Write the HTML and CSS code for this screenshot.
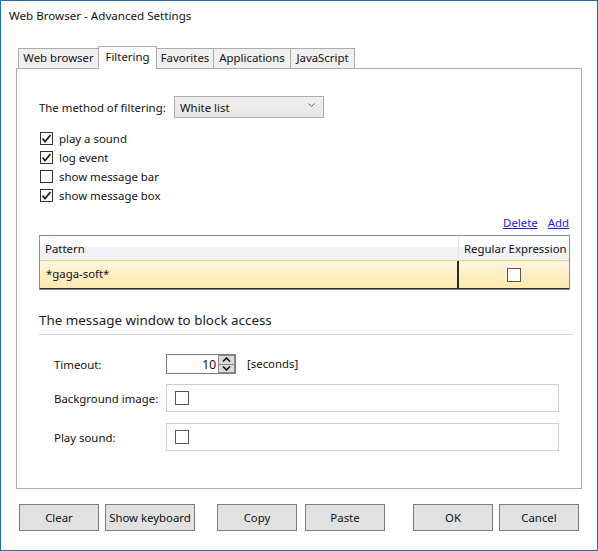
FILE: index.html
```html
<!DOCTYPE html>
<html>
<head>
<meta charset="utf-8">
<link rel="stylesheet" href="styles.css">
</head>
<body>
<div class="window">
  <div class="titlebar">Web Browser - Advanced Settings</div>
  <div class="tabs">
    <div class="tab w1">Web browser</div>
    <div class="tab w2 active">Filtering</div>
    <div class="tab w3">Favorites</div>
    <div class="tab w4">Applications</div>
    <div class="tab w5">JavaScript</div>
  </div>
  <div class="panel">
    <div class="method-row">
      <span class="method-label">The method of filtering:</span>
      <div class="combo">
        <span>White list</span>
        <svg class="chev" width="7" height="4" viewBox="0 0 7 4"><path d="M0.5 0.5 L3.5 3.5 L6.5 0.5" fill="none" stroke="#666" stroke-width="1"/></svg>
      </div>
    </div>
    <div class="checks">
      <div class="check"><span class="box"><svg width="11" height="11" viewBox="0 0 11 11"><path d="M1.5 5.5 L4 8.5 L9.5 2" fill="none" stroke="#222" stroke-width="1.8"/></svg></span>play a sound</div>
      <div class="check"><span class="box"><svg width="11" height="11" viewBox="0 0 11 11"><path d="M1.5 5.5 L4 8.5 L9.5 2" fill="none" stroke="#222" stroke-width="1.8"/></svg></span>log event</div>
      <div class="check"><span class="box"></span>show message bar</div>
      <div class="check"><span class="box"><svg width="11" height="11" viewBox="0 0 11 11"><path d="M1.5 5.5 L4 8.5 L9.5 2" fill="none" stroke="#222" stroke-width="1.8"/></svg></span>show message box</div>
    </div>
    <div class="links"><a class="link">Delete</a><a class="link">Add</a></div>
    <div class="grid">
      <div class="grid-head">
        <div class="hcell pattern">Pattern</div>
        <div class="hcell regex">Regular Expression</div>
      </div>
      <div class="grid-row">
        <div class="cell pattern">*gaga-soft*</div>
        <div class="cell regex"><span class="cbox"></span></div>
      </div>
    </div>
    <div class="section-title">The message window to block access</div>
    <div class="form">
      <div class="frow timeout">
        <span class="flabel">Timeout:</span>
        <div class="spin">
          <span class="spin-val">10</span>
          <div class="spin-btns">
            <span class="sb"><svg width="9" height="5" viewBox="0 0 9 5"><path d="M1 4.5 L4.5 1 L8 4.5" fill="none" stroke="#111" stroke-width="1.6"/></svg></span>
            <span class="sb"><svg width="9" height="5" viewBox="0 0 9 5"><path d="M1 0.5 L4.5 4 L8 0.5" fill="none" stroke="#111" stroke-width="1.6"/></svg></span>
          </div>
        </div>
        <span class="unit">[seconds]</span>
      </div>
      <div class="frow">
        <span class="flabel">Background image:</span>
        <div class="fbox"><span class="cbox"></span></div>
      </div>
      <div class="frow">
        <span class="flabel">Play sound:</span>
        <div class="fbox"><span class="cbox"></span></div>
      </div>
    </div>
  </div>
  <div class="buttons">
    <div class="btn b-clear">Clear</div>
    <div class="btn b-kbd">Show keyboard</div>
    <div class="btn b-copy">Copy</div>
    <div class="btn b-paste">Paste</div>
    <div class="btn b-ok">OK</div>
    <div class="btn b-cancel">Cancel</div>
  </div>
</div>
</body>
</html>
```

FILE: styles.css
```css
* { box-sizing: border-box; }
html, body { margin: 0; padding: 0; background: #fff; }
body { font-family: "Noto Sans", "Open Sans", sans-serif; font-size: 11.4px; color: #111; }

.window {
  width: 598px;
  height: 551px;
  border: 1px solid #1c6fb9;
  background: #fff;
  display: flex;
  flex-direction: column;
}

.titlebar {
  height: 30px;
  line-height: 30px;
  padding-left: 8px;
  font-size: 11.6px;
  color: #111;
}

.tabs {
  margin-top: 15px;
  margin-left: 17px;
  height: 22px;
  display: flex;
  align-items: flex-end;
}
.tab {
  height: 20px;
  line-height: 18px;
  text-align: center;
  background: #f0f0f0;
  border: 1px solid #acacac;
  border-bottom: none;
  margin-left: -1px;
  white-space: nowrap;
  color: #111;
}
.tab.w1 { width: 81px; margin-left: 0; }
.tab.w2 { width: 59px; }
.tab.w3 { width: 58px; }
.tab.w4 { width: 78px; }
.tab.w5 { width: 65px; }
.tab.active {
  height: 23px;
  margin-bottom: -1px;
  background: #fff;
  position: relative;
  z-index: 1;
  line-height: 20px;
}

.panel {
  margin-left: 15px;
  width: 566px;
  height: 421px;
  border: 1px solid #acacac;
  padding: 27px 11px 0 22px;
  display: flex;
  flex-direction: column;
}

.method-row {
  display: flex;
  align-items: center;
  height: 22px;
}
.method-label { width: 135px; }
.combo {
  width: 150px;
  height: 22px;
  border: 1px solid #acacac;
  background: linear-gradient(#f0f0f0, #e6e6e6);
  display: flex;
  align-items: center;
  justify-content: space-between;
  padding: 0 8px 0 5px;
}
.chev { margin-top: -4px; }

.checks { margin-top: 11px; display: flex; flex-direction: column; }
.check {
  height: 19px;
  display: flex;
  align-items: center;
  padding-left: 1px;
}
.box {
  width: 13px;
  height: 13px;
  border: 1px solid #333;
  background: #fff;
  margin-right: 6px;
  display: flex;
  align-items: center;
  justify-content: center;
}

.links {
  margin-top: 10px;
  height: 16px;
  display: flex;
  justify-content: flex-end;
  gap: 10px;
  padding-right: 1px;
  line-height: 16px;
}
.link { color: #1a1aee; text-decoration: underline; }

.grid {
  margin-top: 4px;
  border: 1px solid #7890aa;
  display: flex;
  flex-direction: column;
}
.grid-head {
  display: flex;
  height: 24px;
  background: linear-gradient(#ffffff 0, #ffffff 45%, #f1f2f4 46%, #f1f2f4 100%);
}
.hcell { line-height: 25px; padding-left: 5px; white-space: nowrap; }
.hcell.pattern { width: 419px; border-right: 1px solid #e3e5e8; }
.hcell.regex { flex: 1; }
.grid-row {
  display: flex;
  height: 29px;
  background: linear-gradient(#fdf6df, #fde8ae);
  border-top: 1px solid #f0cd82;
  border-bottom: 1px solid #2a2a2a;
}
.cell { line-height: 26px; padding-left: 6px; }
.cell.pattern { width: 419px; border-right: 2px solid #2a2a2a; }
.cell.regex { flex: 1; display: flex; align-items: center; justify-content: center; padding-left: 0; }
.cbox {
  width: 14px;
  height: 14px;
  border: 1px solid #555;
  background: #fff;
  display: inline-block;
}

.section-title {
  margin-top: 20px;
  font-size: 13.4px;
  line-height: 20px;
  padding-bottom: 4px;
  border-bottom: 1px solid #d5d5d5;
  margin-right: -4px;
  color: #1a1a1a;
}

.form {
  padding-left: 15px;
  margin-top: 19px;
  display: flex;
  flex-direction: column;
  gap: 11px;
}
.frow { display: flex; align-items: center; height: 28px; }
.frow.timeout { height: 20px; margin-bottom: -1px; }
.flabel { width: 112px; }
.spin {
  width: 70px;
  height: 20px;
  border: 1px solid #7a7a7a;
  display: flex;
  align-items: center;
  justify-content: flex-end;
}
.spin-val { padding-right: 2px; font-size: 12px; }
.spin-btns {
  width: 17px;
  height: 18px;
  display: flex;
  flex-direction: column;
}
.sb {
  flex: 1;
  background: #dcdcdc;
  border: 1px solid #8a8a8a;
  display: flex;
  align-items: center;
  justify-content: center;
}
.sb + .sb { border-top: none; }
.unit { margin-left: 11px; margin-top: -2px; }
.fbox {
  width: 393px;
  height: 28px;
  border: 1px solid #cfcfcf;
  display: flex;
  align-items: center;
  padding-left: 8px;
}

.buttons {
  margin-top: 15px;
  margin-left: 18px;
  display: flex;
  height: 27px;
}
.btn {
  height: 27px;
  background: #e1e1e1;
  border: 1px solid #7f7f7f;
  display: flex;
  align-items: center;
  justify-content: center;
  color: #111;
  white-space: nowrap;
}
.b-clear { width: 80px; }
.b-kbd { width: 90px; margin-left: 6px; }
.b-copy { width: 80px; margin-left: 22px; }
.b-paste { width: 80px; margin-left: 8px; }
.b-ok { width: 80px; margin-left: 28px; }
.b-cancel { width: 80px; margin-left: 6px; }
```
